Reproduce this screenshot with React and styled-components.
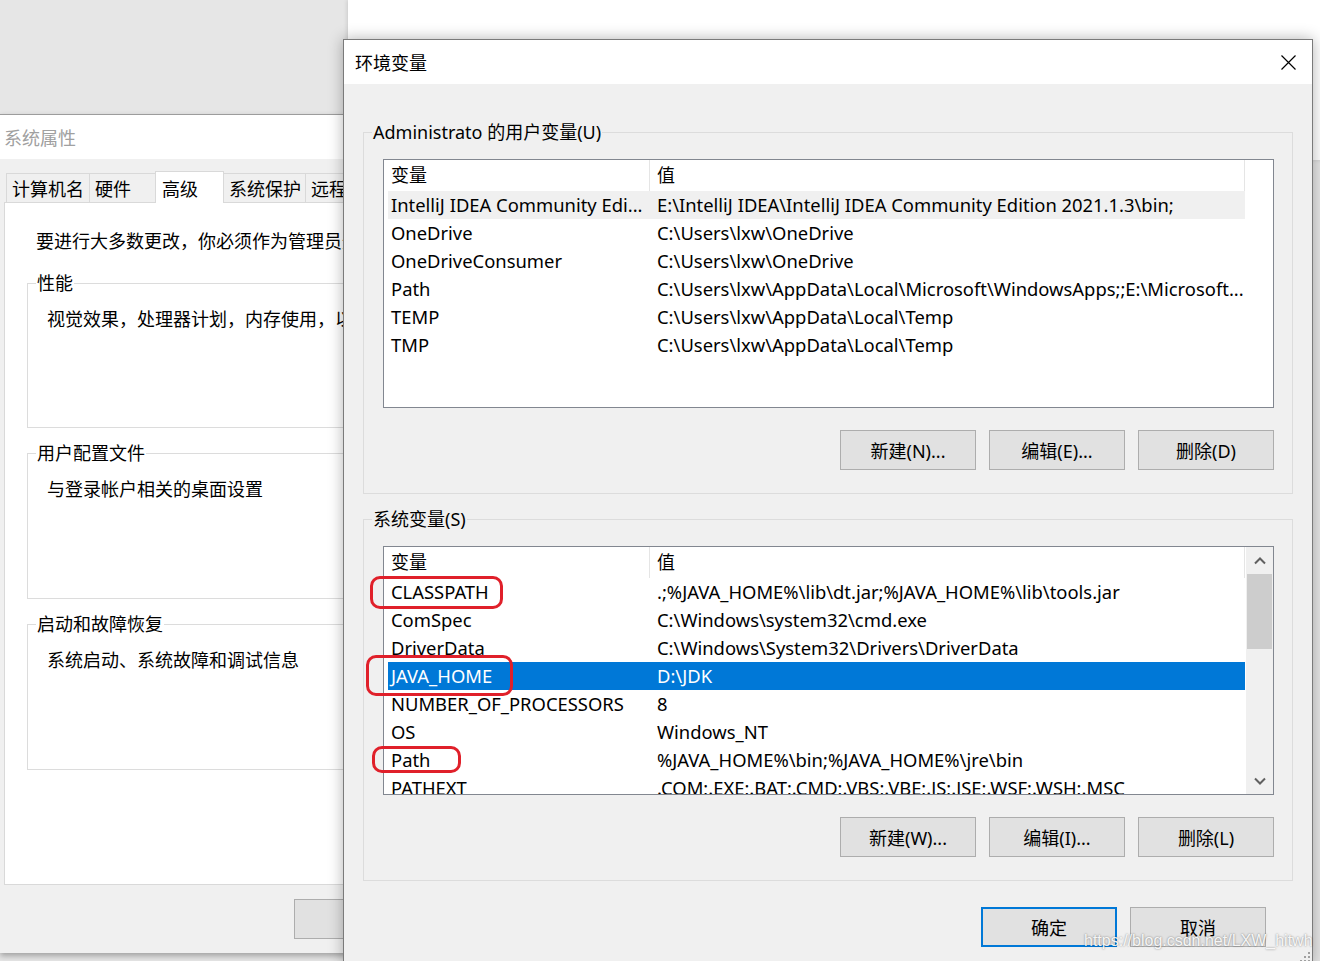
import React from "react";
import styled, { createGlobalStyle } from "styled-components";

const userVars = [
  ["IntelliJ IDEA Community Edi...", "E:\\IntelliJ IDEA\\IntelliJ IDEA Community Edition 2021.1.3\\bin;"],
  ["OneDrive", "C:\\Users\\lxw\\OneDrive"],
  ["OneDriveConsumer", "C:\\Users\\lxw\\OneDrive"],
  ["Path", "C:\\Users\\lxw\\AppData\\Local\\Microsoft\\WindowsApps;;E:\\Microsoft..."],
  ["TEMP", "C:\\Users\\lxw\\AppData\\Local\\Temp"],
  ["TMP", "C:\\Users\\lxw\\AppData\\Local\\Temp"],
];

const sysVars = [
  ["CLASSPATH", ".;%JAVA_HOME%\\lib\\dt.jar;%JAVA_HOME%\\lib\\tools.jar"],
  ["ComSpec", "C:\\Windows\\system32\\cmd.exe"],
  ["DriverData", "C:\\Windows\\System32\\Drivers\\DriverData"],
  ["JAVA_HOME", "D:\\JDK"],
  ["NUMBER_OF_PROCESSORS", "8"],
  ["OS", "Windows_NT"],
  ["Path", "%JAVA_HOME%\\bin;%JAVA_HOME%\\jre\\bin"],
  ["PATHEXT", ".COM;.EXE;.BAT;.CMD;.VBS;.VBE;.JS;.JSE;.WSF;.WSH;.MSC"],
];

const tabs = [
  { label: "计算机名", w: 84 },
  { label: "硬件", w: 67 },
  { label: "高级", w: 69, active: true },
  { label: "系统保护", w: 83 },
  { label: "远程", w: 80 },
];

const sysGroups = [
  { title: "性能", text: "视觉效果，处理器计划，内存使用，以及虚拟内存", mt: 18, h: 133 },
  { title: "用户配置文件", text: "与登录帐户相关的桌面设置", mt: 13, h: 134 },
  { title: "启动和故障恢复", text: "系统启动、系统故障和调试信息", mt: 13, h: 134 },
];

const marks = [
  { x: 370, y: 576, w: 133, h: 33 },
  { x: 366, y: 655, w: 147, h: 41 },
  { x: 372, y: 746, w: 89, h: 27 },
];

const Chevron = ({ down }) => (
  <svg width="12" height="8" viewBox="0 0 12 8">
    <polyline
      points={down ? "1,1.5 6,6.5 11,1.5" : "1,6.5 6,1.5 11,6.5"}
      fill="none"
      stroke="#606060"
      strokeWidth="2"
    />
  </svg>
);

const CloseIcon = () => (
  <svg width="15" height="15" viewBox="0 0 15 15">
    <path d="M0.5 0.5 L14.5 14.5 M14.5 0.5 L0.5 14.5" stroke="#000" strokeWidth="1.2" />
  </svg>
);

const Grip = () => (
  <svg width="12" height="12" viewBox="0 0 12 12">
    {[[9, 1], [9, 5], [5, 5], [9, 9], [5, 9], [1, 9]].map(([x, y], i) => (
      <rect key={i} x={x} y={y} width="2" height="2" fill="#a0a0a0" />
    ))}
  </svg>
);

const VarList = ({ rows, selected, hovered, scroll }) => (
  <List>
    <ListMain>
      <HeadRow>
        <HeadCell $w={262} $pad={3}>变量</HeadCell>
        <HeadCell $w={595} $pad={7}>值</HeadCell>
      </HeadRow>
      {rows.map(([name, value], i) => (
        <Row key={name + i} $selected={i === selected} $hovered={i === hovered}>
          <Cell $w={262} $pad={3}>{name}</Cell>
          <Cell $w={595} $pad={7}>{value}</Cell>
        </Row>
      ))}
    </ListMain>
    {scroll && (
      <ScrollBar>
        <ScrollBtn>
          <Chevron />
        </ScrollBtn>
        <Thumb />
        <Track />
        <ScrollBtn>
          <Chevron down />
        </ScrollBtn>
      </ScrollBar>
    )}
  </List>
);

const App = () => {
  return (
    <>
      <GlobalStyle />
      <Desktop>
        <BackWindow />

        <SysWindow>
          <SysTitle>系统属性</SysTitle>
          <TabRow>
            {tabs.map((t) => (
              <Tab key={t.label} $w={t.w} $active={t.active}>
                {t.label}
              </Tab>
            ))}
          </TabRow>
          <TabPanel>
            <Intro>要进行大多数更改，你必须作为管理员登录。</Intro>
            {sysGroups.map((g) => (
              <Group key={g.title} $mt={g.mt}>
                <GroupHead>
                  <Legend>{g.title}</Legend>
                </GroupHead>
                <SysGroupBody $h={g.h}>{g.text}</SysGroupBody>
              </Group>
            ))}
          </TabPanel>
          <SysButtons>
            <Button>确定</Button>
            <Button>取消</Button>
            <Button>应用(A)</Button>
          </SysButtons>
        </SysWindow>

        <EnvWindow>
          <EnvTitle>
            <span>环境变量</span>
            <CloseIcon />
          </EnvTitle>
          <EnvBody>
            <Group>
              <GroupHead>
                <Legend>Administrato 的用户变量(U)</Legend>
              </GroupHead>
              <EnvGroupBody>
                <VarList rows={userVars} hovered={0} />
                <ButtonRow>
                  <Button>新建(N)...</Button>
                  <Button>编辑(E)...</Button>
                  <Button>删除(D)</Button>
                </ButtonRow>
              </EnvGroupBody>
            </Group>

            <Group $mt={13}>
              <GroupHead>
                <Legend>系统变量(S)</Legend>
              </GroupHead>
              <EnvGroupBody>
                <VarList rows={sysVars} selected={3} scroll />
                <ButtonRow>
                  <Button>新建(W)...</Button>
                  <Button>编辑(I)...</Button>
                  <Button>删除(L)</Button>
                </ButtonRow>
              </EnvGroupBody>
            </Group>

            <BottomRow>
              <Button $default>确定</Button>
              <Button>取消</Button>
            </BottomRow>
          </EnvBody>
          <GripBox>
            <Grip />
          </GripBox>
        </EnvWindow>

        {marks.map((m, i) => (
          <Mark key={i} $x={m.x} $y={m.y} $w={m.w} $h={m.h} />
        ))}

        <Watermark>https://blog.csdn.net/LXW_hitwh</Watermark>
      </Desktop>
    </>
  );
};

export default App;

const GlobalStyle = createGlobalStyle`
  html, body {
    margin: 0;
    padding: 0;
  }
  body {
    background: #e6e6e6;
    font-family: "Noto Sans", "Noto Sans CJK SC", sans-serif;
    font-size: 18px;
    color: #000;
  }
  * {
    box-sizing: border-box;
  }
`;

const Desktop = styled.div`
  position: relative;
  width: 1320px;
  height: 961px;
  overflow: hidden;
  background: #e6e6e6;
`;

const BackWindow = styled.div`
  position: absolute;
  left: 348px;
  top: 0;
  width: 980px;
  height: 160px;
  background: #fff;
  box-shadow: -1px 0 4px rgba(0, 0, 0, 0.12);
`;

/* ---------- 系统属性 (behind) ---------- */

const SysWindow = styled.div`
  position: absolute;
  left: 0;
  top: 114px;
  width: 740px;
  height: 839px;
  background: #f0f0f0;
  border-top: 1px solid #9c9c9c;
  box-shadow: 0 3px 6px rgba(0, 0, 0, 0.3);
  display: flex;
  flex-direction: column;
`;

const SysTitle = styled.div`
  height: 44px;
  flex-shrink: 0;
  background: #fff;
  padding-left: 4px;
  display: flex;
  align-items: center;
  color: #a0a0a0;
`;

const TabRow = styled.div`
  margin-top: 12px;
  padding-left: 7px;
  height: 31px;
  display: flex;
  align-items: flex-end;
`;

const Tab = styled.div`
  position: relative;
  z-index: ${(p) => (p.$active ? 1 : 0)};
  width: ${(p) => p.$w}px;
  height: ${(p) => (p.$active ? 32 : 29)}px;
  margin-left: -1px;
  margin-bottom: ${(p) => (p.$active ? -1 : 0)}px;
  padding-left: ${(p) => (p.$active ? 6 : 5)}px;
  border: 1px solid #d9d9d9;
  border-bottom: none;
  background: ${(p) => (p.$active ? "#fff" : "#f0f0f0")};
  display: flex;
  align-items: center;
  white-space: nowrap;
  overflow: hidden;
`;

const TabPanel = styled.div`
  margin: 0 4px;
  height: 683px;
  flex-shrink: 0;
  background: #fff;
  border: 1px solid #d9d9d9;
  padding: 26px 22px 0 22px;
`;

const Intro = styled.div`
  margin-left: 9px;
  line-height: 24px;
  white-space: nowrap;
`;

const Group = styled.div`
  margin-top: ${(p) => p.$mt || 0}px;
`;

const GroupHead = styled.div`
  display: flex;
  height: 24px;
  line-height: 24px;

  &::before {
    content: "";
    width: 8px;
    margin-top: 12px;
    border-top: 1px solid #dcdcdc;
    border-left: 1px solid #dcdcdc;
  }

  &::after {
    content: "";
    flex: 1;
    margin-top: 12px;
    border-top: 1px solid #dcdcdc;
    border-right: 1px solid #dcdcdc;
  }
`;

const Legend = styled.span`
  padding: 0 1px;
  white-space: nowrap;
`;

const SysGroupBody = styled.div`
  height: ${(p) => p.$h}px;
  border: 1px solid #dcdcdc;
  border-top: none;
  padding: 12px 0 0 19px;
  line-height: 24px;
  white-space: nowrap;
`;

const SysButtons = styled.div`
  margin-top: 14px;
  padding-right: 12px;
  display: flex;
  justify-content: flex-end;
  gap: 13px;
`;

/* ---------- 环境变量 (front) ---------- */

const EnvWindow = styled.div`
  position: absolute;
  left: 343px;
  top: 39px;
  width: 970px;
  height: 926px;
  background: #f0f0f0;
  border: 1px solid #7a7a7a;
  box-shadow: 0 0 14px rgba(0, 0, 0, 0.3);
  display: flex;
  flex-direction: column;
`;

const EnvTitle = styled.div`
  height: 44px;
  flex-shrink: 0;
  background: #fff;
  padding: 0 16px 0 11px;
  display: flex;
  align-items: center;
  justify-content: space-between;
`;

const EnvBody = styled.div`
  padding: 36px 19px 0;
`;

const EnvGroupBody = styled.div`
  border: 1px solid #dcdcdc;
  border-top: none;
  padding: 15px 18px 23px 19px;
`;

const List = styled.div`
  height: 249px;
  border: 1px solid #828790;
  background: #fff;
  display: flex;
  overflow: hidden;
`;

const ListMain = styled.div`
  width: 861px;
  padding-left: 4px;
  overflow: hidden;
`;

const HeadRow = styled.div`
  display: flex;
  height: 31px;
`;

const HeadCell = styled.div`
  width: ${(p) => p.$w}px;
  padding-left: ${(p) => p.$pad}px;
  line-height: 31px;
  border-right: 1px solid #e5e5e5;
`;

const Row = styled.div`
  display: flex;
  height: 28px;
  line-height: 28px;
  font-size: 18.4px;
  background: ${(p) => (p.$selected ? "#0078d7" : p.$hovered ? "#f0f0f0" : "transparent")};
  color: ${(p) => (p.$selected ? "#fff" : "#000")};
`;

const Cell = styled.div`
  width: ${(p) => p.$w}px;
  padding-left: ${(p) => p.$pad}px;
  white-space: nowrap;
  overflow: hidden;
`;

const ScrollBar = styled.div`
  width: 27px;
  margin-left: 1px;
  background: #f0f0f0;
  display: flex;
  flex-direction: column;
`;

const ScrollBtn = styled.div`
  height: 27px;
  display: flex;
  align-items: center;
  justify-content: center;
`;

const Thumb = styled.div`
  height: 75px;
  margin: 0 1px;
  background: #cdcdcd;
`;

const Track = styled.div`
  flex: 1;
`;

const ButtonRow = styled.div`
  margin-top: 22px;
  display: flex;
  justify-content: flex-end;
  gap: 13px;
`;

const Button = styled.button`
  width: 136px;
  height: 40px;
  padding: 0;
  background: #e1e1e1;
  border: ${(p) => (p.$default ? "2px solid #0078d7" : "1px solid #adadad")};
  font-family: inherit;
  font-size: 18px;
  color: #000;
`;

const BottomRow = styled.div`
  margin-top: 26px;
  padding-right: 27px;
  display: flex;
  justify-content: flex-end;
  gap: 13px;
`;

const GripBox = styled.div`
  position: absolute;
  right: 1px;
  bottom: 1px;
  line-height: 0;
`;

/* ---------- annotations ---------- */

const Mark = styled.div`
  position: absolute;
  left: ${(p) => p.$x}px;
  top: ${(p) => p.$y}px;
  width: ${(p) => p.$w}px;
  height: ${(p) => p.$h}px;
  border: 3px solid #e0202a;
  border-radius: 10px;
`;

const Watermark = styled.div`
  position: absolute;
  left: 1084px;
  top: 931px;
  font-family: "Liberation Sans", Arial, sans-serif;
  font-size: 16px;
  line-height: 20px;
  color: rgba(255, 255, 255, 0.92);
  text-shadow: 0 0 2px rgba(0, 0, 0, 0.5);
  white-space: nowrap;
`;
